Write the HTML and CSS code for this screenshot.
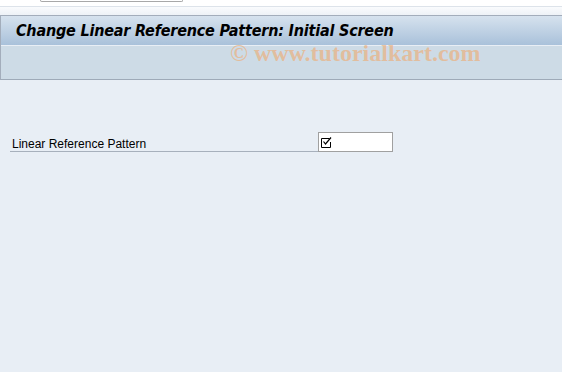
FILE: index.html
```html
<!DOCTYPE html>
<html lang="en">
<head>
    <meta charset="UTF-8">
    <title>Change Linear Reference Pattern: Initial Screen</title>
    <link rel="stylesheet" href="styles.css">
</head>
<body>
    <div class="topbar">
        <div class="cmd-field"></div>
    </div>
    <div class="toolstrip"></div>
    <div class="header">
        <div class="title-bar">
            <h1>Change Linear Reference Pattern: Initial Screen</h1>
        </div>
        <div class="app-toolbar"></div>
        <div class="watermark">&copy; www.tutorialkart.com</div>
    </div>

    <div class="screen">
        <div class="field-row">
            <label class="field-label">Linear Reference Pattern</label>
            <div class="field-input">
                <svg width="12" height="12" viewBox="0 0 12 12">
                    <path d="M8.5 2.5 H0.5 V11.5 H9.5 V6" fill="none" stroke="#000" stroke-width="1"/>
                    <path d="M2.5 5.5 L4.5 8 L10 1.5" fill="none" stroke="#000" stroke-width="1.2"/>
                </svg>
            </div>
        </div>
    </div>
</body>
</html>
```

FILE: styles.css
```css
body {
    margin: 0;
    width: 562px;
    height: 372px;
    overflow: hidden;
    background: #e8eef5;
    font-family: "Liberation Sans", Arial, sans-serif;
}

.topbar {
    height: 6px;
    background: #fff;
    border-bottom: 1px solid #dde3ea;
    position: relative;
}

.cmd-field {
    margin-left: 40px;
    width: 141px;
    height: 1px;
    border: 1px solid #a8a8a8;
    border-top: none;
    border-radius: 0 0 2px 2px;
}

.toolstrip {
    height: 8px;
    background: linear-gradient(#fafbfd, #eef2f7);
    border-bottom: 1px solid #a3adbb;
}

.header {
    position: relative;
    border-left: 1px solid #a3adbb;
    border-bottom: 1px solid #9eaab8;
}

.title-bar {
    height: 29px;
    background: linear-gradient(#d6e2ee, #a9c1da);
    border-bottom: 1px solid #e8eef5;
    display: flex;
    align-items: center;
    padding-left: 15px;
}

.title-bar h1 {
    margin: 0;
    font-family: "DejaVu Sans Condensed", "DejaVu Sans", sans-serif;
    font-size: 16px;
    font-weight: bold;
    font-style: italic;
    color: #000;
    letter-spacing: -0.2px;
}

.app-toolbar {
    height: 33px;
    background: #cddbe6;
}

.watermark {
    position: absolute;
    left: 229px;
    top: 24px;
    font-family: "Liberation Serif", serif;
    font-size: 24px;
    font-weight: bold;
    color: rgba(240, 170, 110, 0.6);
    white-space: nowrap;
}

.screen {
    padding: 52px 0 0 10px;
}

.field-row {
    display: flex;
    align-items: flex-end;
}

.field-label {
    width: 306px;
    padding-left: 2px;
    font-size: 12px;
    color: #000;
    border-bottom: 1px solid #a7b0bc;
    padding-bottom: 0;
}

.field-input {
    width: 71px;
    height: 18px;
    background: #fff;
    border: 1px solid #a0a0a0;
    display: flex;
    align-items: center;
    padding-left: 2px;
    box-sizing: content-box;
}
```
